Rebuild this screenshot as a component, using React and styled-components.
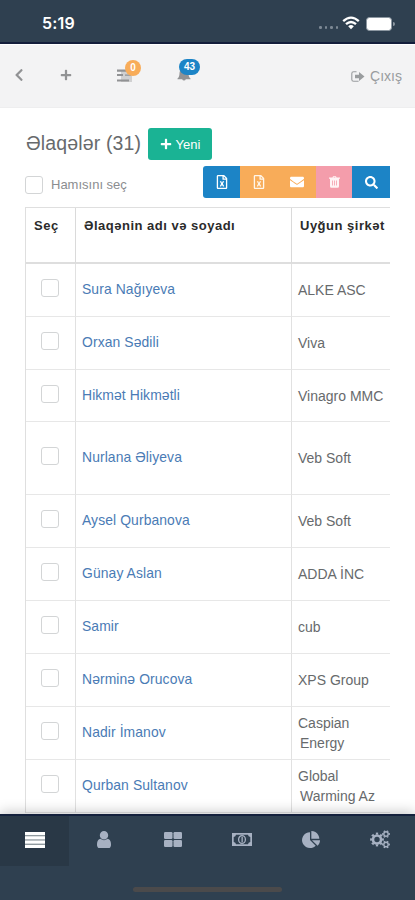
import React, { useState } from 'react'
import styled, { createGlobalStyle } from 'styled-components'
import { FaChevronLeft, FaPlus, FaRegFileExcel, FaEnvelope, FaSearch } from 'react-icons/fa'

const GlobalStyle = createGlobalStyle`
    * {
        box-sizing: border-box;
    }

    body {
        margin: 0;
        background: #fff;
        font-family: "Liberation Sans", Arial, sans-serif;
        font-size: 14px;
        color: #676a6c;
    }
`

const Screen = styled.div`
    display: flex;
    flex-direction: column;
    width: 415px;
    height: 900px;
    overflow: hidden;
    background: #fff;
`

const StatusBar = styled.div`
    flex: none;
    display: flex;
    align-items: flex-start;
    height: 44px;
    padding: 14px 20px 0 42px;
    background: #2f4050;
    border-bottom: 2px solid #131d3b;
    color: #fff;
`

const Clock = styled.span`
    flex: 1;
    font-family: Inter, "Liberation Sans", sans-serif;
    font-size: 16px;
    font-weight: 600;
    letter-spacing: 0.2px;
    line-height: 19px;
`

const SignalDots = styled.div`
    display: flex;
    gap: 3px;
    margin: 12px 4px 0 0;

    i {
        width: 2.5px;
        height: 2.5px;
        border-radius: 50%;
        background: #7d8995;
    }
`

const Battery = styled.div`
    display: flex;
    align-items: center;
    margin: 3px 0 0 6px;

    &::before {
        content: '';
        width: 24px;
        height: 12px;
        border: 1px solid #8c97a1;
        border-radius: 3.5px;
        background: #fff;
    }

    &::after {
        content: '';
        width: 2px;
        height: 4px;
        margin-left: 1px;
        border-radius: 0 2px 2px 0;
        background: #8c97a1;
    }
`

const TopNav = styled.nav`
    flex: none;
    display: flex;
    align-items: center;
    height: 64px;
    padding: 0 13px 2px 12px;
    background: #f3f3f4;
    border-top: 1px solid #fff;
    border-bottom: 1px solid #eeeeef;
    color: #919294;
`

const NavItem = styled.a`
    position: relative;
    display: flex;
    align-items: center;
    width: ${({ $width }) => $width}px;
    cursor: pointer;
`

const Badge = styled.span`
    position: absolute;
    top: -9px;
    left: ${({ $left }) => $left}px;
    min-width: 16px;
    height: 16px;
    padding: 0 ${({ $wide }) => ($wide ? 5 : 4)}px;
    border-radius: 8px;
    background: ${({ $color }) => $color};
    color: #fff;
    font-size: 10px;
    font-weight: bold;
    line-height: 16px;
    text-align: center;
`

const Logout = styled.a`
    display: flex;
    align-items: center;
    gap: 5px;
    margin-left: auto;
    padding-top: 2px;
    color: #999c9e;
    cursor: pointer;
`

const Main = styled.main`
    flex: 1;
    min-height: 0;
    padding: 20px 25px 0;
    overflow: hidden;
`

const Heading = styled.header`
    display: flex;
    align-items: center;
    gap: 5px;
    height: 32px;
    padding-left: 1px;
`

const Title = styled.h2`
    width: 117px;
    margin: 0 0 3px;
    font-size: 19.5px;
    font-weight: 400;
    letter-spacing: 0.15px;
    line-height: 28px;
    white-space: nowrap;
`

const AddButton = styled.button`
    display: flex;
    align-items: center;
    justify-content: center;
    gap: 4px;
    width: 64px;
    height: 32px;
    padding: 0;
    border: 0;
    border-radius: 3px;
    background: #1ab394;
    color: #fff;
    font-family: inherit;
    font-size: 13px;
    cursor: pointer;
`

const Toolbar = styled.div`
    display: flex;
    justify-content: space-between;
    height: 32px;
    margin-top: 6px;
`

const SelectAll = styled.label`
    display: flex;
    align-items: center;
    gap: 8px;
    padding-top: 5px;
    color: #8b8d8f;
    font-size: 13px;
`

const Checkbox = styled.input`
    appearance: none;
    display: block;
    width: 18px;
    height: 18px;
    margin: 0;
    border: 1px solid #d3d5d6;
    border-radius: 3px;
    background: #fff;

    &:checked {
        background: #1c84c6;
    }
`

const Actions = styled.div`
    display: flex;
    border-radius: 3px 0 0 3px;
    overflow: hidden;
`

const Action = styled.button`
    display: flex;
    align-items: center;
    justify-content: center;
    width: ${({ $width }) => $width || 37}px;
    padding: 0;
    border: 0;
    background: ${({ $color }) => $color};
    color: ${({ $faded }) => ($faded ? '#fff6ea' : '#fff')};
    cursor: pointer;
`

const TableWrapper = styled.div`
    margin-top: 9px;
    overflow: hidden;
`

const Table = styled.div`
    display: grid;
    grid-template-columns: 50px 216px 99px;
    border-left: 1px solid #dfdfdf;
    border-top: 1px solid #dfdfdf;
`

const HeadCell = styled.div`
    height: 56px;
    padding: 9px 0 0 8px;
    border-right: 1px solid #dadada;
    border-bottom: 2px solid #dedede;
    color: #2b2b2b;
    font-size: 13px;
    font-weight: bold;
    letter-spacing: 0.5px;
    line-height: 17px;
    white-space: nowrap;

    &:nth-child(3) {
        border-right: 0;
    }
`

const Cell = styled.div`
    display: flex;
    align-items: center;
    height: ${({ $height }) => $height}px;
    padding-left: 6px;
    border-right: ${({ $last }) => ($last ? 0 : '1px solid #e1e1e1')};
    border-bottom: 1px solid #e7e7e7;
    line-height: 20px;
`

const CheckCell = styled(Cell)`
    padding: 0 0 4px 15px;
`

const Name = styled.a`
    padding-bottom: 2px;
    color: #4a7bb5;
    font-size: 13.9px;
    letter-spacing: 0.1px;
    cursor: pointer;
`

const Company = styled.span`
    font-size: 14px;

    span {
        padding-left: 2px;
    }
`

const BottomNav = styled.nav`
    position: relative;
    flex: none;
    height: 86px;
    background: #2f4050;
    border-top: 2px solid #14213c;
    box-shadow: 0 -2px 12px rgba(0, 0, 0, 0.22);
`

const Tabs = styled.div`
    display: grid;
    grid-template-columns: repeat(6, 1fr);
    height: 50px;
`

const Tab = styled.button`
    display: flex;
    align-items: center;
    justify-content: center;
    padding: 0 0 3px;
    border: 0;
    background: ${({ $active }) => ($active ? '#293846' : 'transparent')};
    color: ${({ $active }) => ($active ? '#fff' : '#a7b1c2')};
    cursor: pointer;
`

const HomeIndicator = styled.div`
    width: 149px;
    height: 5px;
    margin: 21px auto 0;
    border-radius: 3px;
    background: #4b4a4b;
`

const WifiIcon = () => (
    <svg width="18" height="16" viewBox="0 -2 18 16" fill="none" stroke="#fff" strokeWidth="2.3">
        <path d="M1.2 5.2Q9-2 16.8 5.2" />
        <path d="M4 8.2Q9 3.7 14 8.2" />
        <path d="M6.2 10.2Q9 7.8 11.8 10.2L9 13.2Z" fill="#fff" stroke="none" />
    </svg>
)

const TasksIcon = () => (
    <svg width="15" height="13" viewBox="0 0 15 13">
        <rect x="4" y="1" width="11" height="12" fill="#d0d0d1" />
        <path fill="currentColor" d="M0 .5h15v2.200H0zM0 5h6v2H0zM0 10.500h12v2H0zM8 5.500h6v1.300H8z" />
    </svg>
)

const BellIcon = () => (
    <svg width="14" height="14" viewBox="0 0 14 14">
        <path fill="currentColor" d="M7 0c.6 0 1 .4 1 1 2.300.4 3.500 2 3.500 4.200 0 2.800.7 4.300 2 5.300v.8h-4.700a1.900 1.900 0 0 1-3.600 0H.5v-.8c1.300-1 2-2.500 2-5.300C2.500 3 3.700 1.400 6 1c0-.6.4-1 1-1z" />
    </svg>
)

const LogoutIcon = () => (
    <svg width="14" height="11" viewBox="0 0 14 11">
        <path d="M5.500.8H2.600Q.8.800.8 2.600v5.800q0 1.800 1.800 1.800h5" fill="none" stroke="currentColor" strokeWidth="1.100" />
        <path d="M4 3.700h4V1l5.500 4.500L8 10V7.300H4z" fill="currentColor" />
    </svg>
)

const TrashIcon = () => (
    <svg width="11" height="12" viewBox="0 0 11 12">
        <path fill="#fff3f5" fillRule="evenodd" d="M3.500 1.500 4 .2h3l.5 1.300H11v1.200h-1v7.600q0 1.500-1.400 1.500H2.400Q1 11.800 1 10.300V2.700H0V1.500zM4.600 1.500h1.800l-.2-.4H4.800zM3 4.400v5h.8v-5zM5.100 4.400v5h.8v-5zM7.200 4.400v5H8v-5z" />
    </svg>
)

const ListIcon = () => (
    <svg width="20" height="16" viewBox="0 0 20 16" fill="currentColor">
        <rect width="20" height="16" fill="#909a9f" />
        <rect width="20" height="3" />
        <rect y="4.300" width="20" height="3" />
        <rect y="8.600" width="20" height="3" />
        <rect y="13" width="20" height="3" />
    </svg>
)

const UserIcon = () => (
    <svg width="14" height="17" viewBox="0 128 1280 1536" preserveAspectRatio="none">
        <path fill="currentColor" d="M1280 1399q0 109-62.500 187t-150.500 78h-854q-88 0-150.500-78t-62.500-187q0-85 8.500-160.500t31.500-152 58.500-131 94-89 134.500-34.500q131 128 313 128t313-128q76 0 134.500 34.500t94 89 58.500 131 31.500 152 8.500 160.500zm-256-887q0 159-112.500 271.500t-271.500 112.500-271.500-112.500-112.500-271.500 112.500-271.500 271.500-112.500 271.500 112.500 112.500 271.500z" />
    </svg>
)

const GridIcon = () => (
    <svg width="18" height="15" viewBox="0 0 18 15" fill="currentColor">
        <rect width="8.500" height="7" rx="1.200" />
        <rect x="9.500" width="8.500" height="7" rx="1.200" />
        <rect y="8" width="8.500" height="7" rx="1.200" />
        <rect x="9.500" y="8" width="8.500" height="7" rx="1.200" />
    </svg>
)

const MoneyIcon = () => (
    <svg width="20" height="13" viewBox="0 0 20 13" fill="currentColor">
        <path fillRule="evenodd" d="M0 0h20v13H0zM4 1.700Q3.800 3.800 1.700 4v5q2.100.2 2.300 2.300h12q.2-2.100 2.300-2.300V4Q16.200 3.800 16 1.700z" />
        <ellipse cx="10" cy="6.500" rx="3.400" ry="3.900" fill="none" stroke="currentColor" strokeWidth="1.300" />
        <path d="M9.500 3.800h1.300v5.400H9.500z" />
    </svg>
)

const PieIcon = () => (
    <svg width="18" height="17" viewBox="0 0 1728 1664" preserveAspectRatio="none">
        <path fill="currentColor" d="M768 890l546 546q-106 108-247.500 168t-298.500 60q-209 0-385.500-103t-279.500-279.500-103-385.500 103-385.500 279.500-279.500 385.500-103v762zm187 6h773q0 157-60 298.500t-168 247.500zm709-128h-768v-768q209 0 385.500 103t279.500 279.500 103 385.500z" />
    </svg>
)

// each gear is a ring plus a dashed outer ring for the teeth
const CogsIcon = () => (
    <svg width="20" height="19" viewBox="0 0 20 19" fill="none" stroke="currentColor">
        <circle cx="7" cy="9.500" r="4" strokeWidth="2.600" />
        <circle cx="7" cy="9.500" r="5.900" strokeWidth="2" pathLength="16" strokeDasharray="1 1" strokeDashoffset="0.500" />
        <circle cx="16" cy="4" r="2.200" strokeWidth="1.400" />
        <circle cx="16" cy="4" r="3.300" strokeWidth="1.200" pathLength="12" strokeDasharray="1 1" strokeDashoffset="0.500" />
        <circle cx="16" cy="14.500" r="2.200" strokeWidth="1.400" />
        <circle cx="16" cy="14.500" r="3.300" strokeWidth="1.200" pathLength="12" strokeDasharray="1 1" strokeDashoffset="0.500" />
    </svg>
)

const contacts = [
    { name: 'Sura Nağıyeva', company: 'ALKE ASC' },
    { name: 'Orxan Sədili', company: 'Viva' },
    { name: 'Hikmət Hikmətli', company: 'Vinagro MMC', height: 52 },
    { name: 'Nurlana Əliyeva', company: 'Veb Soft', height: 73 },
    { name: 'Aysel Qurbanova', company: 'Veb Soft' },
    { name: 'Günay Aslan', company: 'ADDA İNC' },
    { name: 'Samir', company: 'cub' },
    { name: 'Nərminə Orucova', company: 'XPS Group' },
    { name: 'Nadir İmanov', company: 'Caspian', second: 'Energy' },
    { name: 'Qurban Sultanov', company: 'Global', second: 'Warming Az' },
]

const tabs = [ListIcon, UserIcon, GridIcon, MoneyIcon, PieIcon, CogsIcon]

export default function App() {

    const [active, setActive] = useState(0)

    return (
        <Screen>
            <GlobalStyle />
            <StatusBar>
                <Clock>5:19</Clock>
                <SignalDots><i /><i /><i /><i /></SignalDots>
                <WifiIcon />
                <Battery />
            </StatusBar>
            <TopNav>
                <NavItem $width={48}><FaChevronLeft size={14} /></NavItem>
                <NavItem $width={57}><FaPlus size={12} /></NavItem>
                <NavItem $width={60}>
                    <TasksIcon />
                    <Badge $left={8} $color="#f8ac59">0</Badge>
                </NavItem>
                <NavItem $width={40}>
                    <BellIcon />
                    <Badge $left={2} $color="#1c84c6" $wide>43</Badge>
                </NavItem>
                <Logout><LogoutIcon /> Çıxış</Logout>
            </TopNav>
            <Main>
                <Heading>
                    <Title>Əlaqələr (31)</Title>
                    <AddButton><FaPlus size={12} /> Yeni</AddButton>
                </Heading>
                <Toolbar>
                    <SelectAll><Checkbox type="checkbox" /> Hamısını seç</SelectAll>
                    <Actions>
                        <Action $color="#1c84c6"><FaRegFileExcel size={14} /></Action>
                        <Action $color="#f8ac59" $width={38} $faded><FaRegFileExcel size={14} /></Action>
                        <Action $color="#f8ac59" $width={38}><FaEnvelope size={14} /></Action>
                        <Action $color="#f49dab" $width={36}><TrashIcon /></Action>
                        <Action $color="#1c84c6" $width={38}><FaSearch size={13} /></Action>
                    </Actions>
                </Toolbar>
                <TableWrapper>
                    <Table>
                        <HeadCell>Seç</HeadCell>
                        <HeadCell>Əlaqənin adı və soyadı</HeadCell>
                        <HeadCell>Uyğun şirkət</HeadCell>
                        {contacts.map(({ name, company, second, height = 53 }) => (
                            <React.Fragment key={name}>
                                <CheckCell $height={height}><Checkbox type="checkbox" /></CheckCell>
                                <Cell $height={height}><Name>{name}</Name></Cell>
                                <Cell $height={height} $last>
                                    <Company>{company}{second && <><br /><span>{second}</span></>}</Company>
                                </Cell>
                            </React.Fragment>
                        ))}
                    </Table>
                </TableWrapper>
            </Main>
            <BottomNav>
                <Tabs>
                    {tabs.map((Icon, i) => (
                        <Tab key={i} $active={i === active} onClick={() => setActive(i)}><Icon /></Tab>
                    ))}
                </Tabs>
                <HomeIndicator />
            </BottomNav>
        </Screen>
    )
}
